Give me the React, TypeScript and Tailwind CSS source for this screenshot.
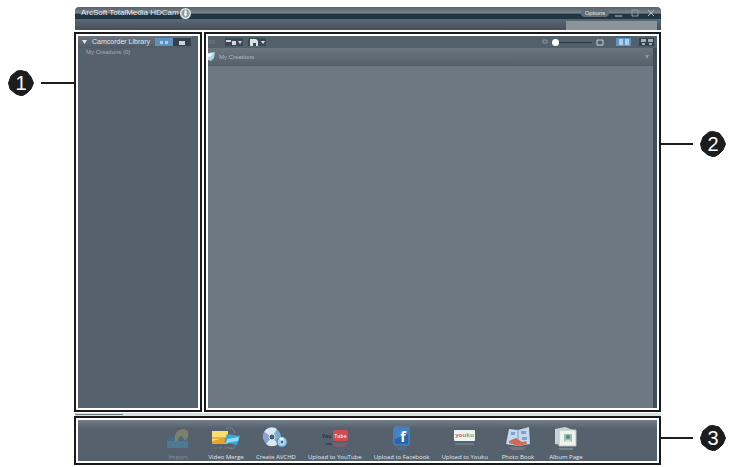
import type { ReactNode } from 'react';

function Badge({ n }: { n: string }) {
  return (
    <span className="relative flex size-[26px] shrink-0 items-center justify-center">
      <svg viewBox="0 0 26 26" className="absolute inset-0 size-full" aria-hidden="true">
        <path d="M9 1 L13 .5 L19 2 L23 7 L25.5 13 L23 19 L19 23 L14 26 L8 24 L2 19 L.5 13 L3 6Z" fill="#1d1d1d" stroke="#1d1d1d" strokeLinejoin="round" />
      </svg>
      <span className="relative text-[20px] leading-5 text-white">{n}</span>
    </span>
  );
}

function RightCallout({ n }: { n: string }) {
  return (
    <div className="flex items-center">
      <span className="h-[2px] w-8 bg-[#1d1d1d]" />
      <span className="ml-[7px]"><Badge n={n} /></span>
    </div>
  );
}

function Frame({ className, children }: { className: string; children: ReactNode }) {
  return (
    <div className={`flex border-2 border-[#1b191a] bg-white p-0.5 ${className}`}>
      <div className="flex min-w-0 flex-1 flex-col">{children}</div>
    </div>
  );
}

const importIcon = (
  <g opacity=".65">
    <path d="M3 11h7l2-2h12v12H3z" fill="#3d7193" />
    <path d="M3 14h21v7H3z" fill="#4a87a8" />
    <path d="M11 14c-1-7 2-12 9-12 4 1 5 4 4 8l-3 4-3-5-3 1-1 4z" fill="#96916c" />
  </g>
);

const mergeIcon = (
  <>
    <path d="M14 2q6-4 9 4M15 20q6 4 9-2" fill="none" stroke="#718497" />
    <path d="M0 4h16v13H0z" fill="#e5a72a" />
    <path d="M0 4h16v6L0 14z" fill="#ffdc6c" />
    <path d="M0 11h16" stroke="#c98b22" />
    <path d="M15 7l13 2-3 9-13-3z" fill="#38a5dc" />
    <path d="M15 12l12-2-1 4-12 2z" fill="#8bdcff" />
    <path d="M2 21h18" stroke="#8b795a" strokeDasharray="3 2" />
  </>
);

const discIcon = (
  <>
    <circle cx="10" cy="10" r="9" fill="#7eacd0" />
    <path d="M10 10L2 5A9 9 0 0 1 15 2zM10 10l6 7a9 9 0 0 1-12 0z" fill="#d3e9f7" />
    <path d="M10 10L1 12a9 9 0 0 1 1-7z" fill="#9b9bd7" />
    <circle cx="10" cy="10" r="3" fill="#486077" stroke="#dcefff" />
    <circle cx="20" cy="15" r="5" fill="#9bcce9" stroke="#5284ac" />
    <path d="M20 15l-3-4a5 5 0 0 1 5 0z" fill="#effaff" />
    <circle cx="20" cy="15" r="2" fill="#416480" stroke="#d8f0ff" />
  </>
);

const youtubeIcon = (
  <>
    <text x="1" y="11" fontSize="5" fontWeight="700" fill="#283039">You</text>
    <rect x="12" y="3" width="15" height="11" rx="2" fill="#cf4d51" />
    <text x="19.5" y="11" fontSize="5" fontWeight="700" textAnchor="middle" fill="#f8d7d5">Tube</text>
    <path d="M12 16h14l-2 4H13z" fill="#87646d" opacity=".6" />
    <path d="M4 16h7v2H5z" fill="#3e4853" />
  </>
);

const facebookIcon = (
  <>
    <rect x="6" y="0" width="15" height="18" rx="2" fill="#2465af" stroke="#5c91ca" />
    <path d="M7 1h13v6L7 12z" fill="#4384c8" />
    <text x="15" y="15" fontSize="14" fontWeight="700" textAnchor="middle" fill="#fff">f</text>
    <path d="M8 20h11l-3 3h-6z" fill="#566f99" opacity=".7" />
  </>
);

const youkuIcon = (
  <>
    <rect x="3" y="3" width="21" height="11" rx="1" fill="#edf3f1" />
    <text x="13.5" y="10" fontSize="6" fontWeight="700" textAnchor="middle" fill="#d3685d">yo<tspan fill="#58aaa0">uku</tspan></text>
    <path d="M4 16h19v2H4z" fill="#707b84" />
  </>
);

const photoIcon = (
  <>
    <path d="M5 2l9 1 11-3 1 17-12 2-12-2z" fill="#c3d9f0" />
    <path d="M14 3v14" stroke="#7b9bc3" />
    <path d="M7 5h4v3H7zm10-1h5v3h-5zm1 6h5v3h-5z" fill="#84a2c9" />
    <path d="M5 14l7-3 6 4 4-1 1 3-9 2-9-3z" fill="#d06a52" />
    <path d="M5 20h17l-3 3H8z" fill="#747481" />
  </>
);

const albumIcon = (
  <>
    <path d="M3 2l10-2 11 4-3 15-18-2z" fill="#c5d7d2" />
    <path d="M7 3h17v16H7z" fill="#eef3ee" stroke="#b5c4c5" />
    <path d="M12 7h8v8h-8z" fill="#a3bbb5" />
    <circle cx="16" cy="10" r="2" fill="#5d8381" />
    <path d="M12 15q4-5 8 0z" fill="#d6e3db" />
    <path d="M6 21h15v2H8z" fill="#76838a" />
  </>
);

const actions = [
  { label: 'Import', icon: importIcon, dim: true },
  { label: 'Video Merge', icon: mergeIcon },
  { label: 'Create AVCHD', icon: discIcon },
  { label: 'Upload to YouTube', icon: youtubeIcon },
  { label: 'Upload to Facebook', icon: facebookIcon },
  { label: 'Upload to Youku', icon: youkuIcon },
  { label: 'Photo Book', icon: photoIcon },
  { label: 'Album Page', icon: albumIcon },
];

function TitleBar() {
  return (
    <header className="ml-px text-[#e4e8ea]">
      <div className="flex h-3 items-center rounded-t-sm bg-linear-to-b from-[#5d6871] from-10% via-[#7b858e] via-50% to-[#223642] to-60% px-1.5">
        <h1 className="text-[8px] leading-3">ArcSoft TotalMedia HDCam</h1>
        <button aria-label="Downloads" className="ml-px flex size-[11px] items-center justify-center rounded-full bg-[#dfe4e6]">
          <svg width="11" height="11" aria-hidden="true"><circle cx="5.5" cy="5.5" r="4" fill="#98a3aa" /><path d="M4 2h3v4h1L5.5 9 3 6h1z" fill="#f4f6f7" stroke="#6b777f" strokeWidth=".5" /></svg>
        </button>
        <button className="ml-auto h-2 w-7 rounded-sm bg-[#5f6d77] text-[6px] leading-2">Options</button>
        <div className="ml-1.5 flex gap-2">
          <button aria-label="Minimize"><svg width="8" height="8" aria-hidden="true"><path d="M0 7h7" stroke="#b9c3c9" /></svg></button>
          <button aria-label="Maximize"><svg width="8" height="8" aria-hidden="true"><path d="M1 1h6v6H1z" fill="none" stroke="#93a0a8" /></svg></button>
          <button aria-label="Close"><svg width="8" height="8" aria-hidden="true"><path d="M1 1l6 6M7 1L1 7" stroke="#b5c0c6" /></svg></button>
        </div>
      </div>
      <div className="flex h-[11px] justify-end bg-linear-to-b from-[#5a6875] to-[#46505c] pr-1">
        <input aria-label="Search" className="mt-0.5 h-[9px] w-[91px] bg-[#8b949b] px-1 text-[6px]" />
      </div>
    </header>
  );
}

function Library() {
  return (
    <div className="flex-1 bg-[#56616e]">
      <div className="mr-1.5 flex h-3 items-center bg-linear-to-b from-[#6a737b] to-[#505b67] pl-1">
        <svg width="5" height="4" aria-hidden="true"><path d="M0 0h5L2.5 4z" fill="#e0e5e8" /></svg>
        <h2 className="ml-[5px] w-[63px] text-[7px] leading-3 text-[#dfe4e7]">Camcorder Library</h2>
        <button aria-label="Folder view" className="flex h-2 w-[18px] items-center justify-center bg-[#5e91bd]"><svg width="8" height="5" aria-hidden="true"><path d="M0 1h3v3H0zm5 0h3v3H5z" fill="#a9cbe3" /></svg></button>
        <button aria-label="Calendar view" className="flex h-2 w-[18px] items-center justify-center bg-[#34414c]"><svg width="8" height="5" aria-hidden="true"><path d="M1 1h6v4H1z" fill="#cbd3d7" /></svg></button>
      </div>
      <p className="ml-2 text-[6px] leading-2 text-[#a4adb6]">My Creations (0)</p>
    </div>
  );
}

function Browser() {
  return (
    <>
      <div className="flex h-3 shrink-0 items-center bg-[#52606c] pr-[3px]">
        <svg width="8" height="6" aria-hidden="true"><path d="M1 2h6M1 4h6" stroke="#6d7a85" /></svg>
        <button aria-label="Sort" className="ml-[9px] flex h-2 w-[18px] items-center justify-center bg-[#3c4852]"><svg width="16" height="7" aria-hidden="true"><path d="M0 1h5v2H0zM6 2h4v4H6zM12 2h4l-2 3z" fill="#ced7dc" /></svg></button>
        <button aria-label="Save options" className="ml-[5px] flex h-2 w-[18px] items-center justify-center bg-[#3c4852]"><svg width="16" height="8" aria-hidden="true"><path d="M1 1h6l2 2v5H7V5H4v3H1zM12 3h4l-2 3z" fill="#d9e1e5" /></svg></button>
        <svg className="ml-auto" width="6" height="6" aria-hidden="true"><path d="M1 1h4v3H1z" fill="none" stroke="#8a969f" /></svg>
        <input aria-label="Thumbnail size" type="range" min="0" max="100" defaultValue="0" className="ml-1 h-[7px] w-10 appearance-none bg-linear-to-b from-transparent from-40% via-[#273743] via-50% to-transparent to-65% [&::-webkit-slider-thumb]:size-[7px] [&::-webkit-slider-thumb]:appearance-none [&::-webkit-slider-thumb]:rounded-full [&::-webkit-slider-thumb]:bg-white" />
        <svg className="ml-1" width="8" height="7" aria-hidden="true"><path d="M1 1h6v5H1z" fill="none" stroke="#c5ced4" /></svg>
        <button aria-label="Grid view" className="ml-3 flex h-2 w-[15px] items-center justify-center bg-[#6094c2]"><svg width="10" height="6" aria-hidden="true"><path d="M0 0h4v6H0zm6 0h4v6H6z" fill="#a8d0ec" /></svg></button>
        <button aria-label="Filmstrip view" className="ml-2 flex h-2 w-[15px] items-center justify-center bg-[#35424d]"><svg width="12" height="6" aria-hidden="true"><path d="M0 0h5v3H0zM7 0h5v3H7zM1 4h3v2H1zM8 4h3v2H8z" fill="#a3afb7" /></svg></button>
      </div>
      <div className="flex flex-1 bg-[#40515f]">
        <div className="flex flex-1 flex-col">
          <div className="flex h-[18px] items-center border-b border-[#515e68] bg-linear-to-b from-[#6a757e] to-[#56616c] pr-1">
            <svg width="8" height="10" aria-hidden="true"><path d="M0 1l7-1-1 6-3 3-3-1z" fill="#add4e7" /><path d="M0 2l5-1-2 3-3 1z" fill="#f1fbff" /></svg>
            <h2 className="ml-[3px] text-[6px] leading-3 text-[#b3bdc4]">My Creations</h2>
            <button aria-label="Collapse" className="ml-auto"><svg width="4" height="4" aria-hidden="true"><path d="M0 0h4L2 4z" fill="#8c99a3" /></svg></button>
          </div>
          <div className="flex-1 bg-[#6d7882]" />
        </div>
        <div className="w-1 bg-[#3d4e5c]" />
      </div>
    </>
  );
}

export default function App() {
  return (
    <main className="flex min-h-screen bg-white pb-0.5 pt-[7px] font-['Liberation_Sans',sans-serif]">
      <aside className="flex w-[74px] shrink-0 items-start pl-2 pt-[63px]">
        <div className="flex w-full items-center">
          <Badge n="1" />
          <span className="ml-[7px] h-[2px] flex-1 bg-[#1d1d1d]" />
        </div>
      </aside>
      <section className="flex min-w-0 flex-1 flex-col">
        <TitleBar />
        <div className="mt-0.5 flex flex-1 gap-0.5">
          <Frame className="w-32"><Library /></Frame>
          <Frame className="flex-1"><Browser /></Frame>
        </div>
        <div className="ml-px mt-px flex h-[3px] bg-[#d9dfde]"><span className="mt-px h-px w-12 bg-[#6d7a79]" /></div>
        <Frame className="h-[49px]">
          <nav aria-label="Create and share" className="flex flex-1 items-end gap-3 bg-linear-to-b from-[#738087] to-[#56616e] to-20% pl-[82px] font-['Open_Sans',sans-serif]">
            {actions.map(({ label, icon, dim }) => (
              <button key={label} className="flex min-w-9 flex-col items-center gap-0.5 whitespace-nowrap">
                <svg viewBox="0 0 28 24" width="28" height="24" className="overflow-visible" aria-hidden="true">{icon}</svg>
                <span className={`text-[6px] leading-2 ${dim ? 'text-[#87919b]' : 'text-[#e2e7eb]'}`}>{label}</span>
              </button>
            ))}
          </nav>
        </Frame>
      </section>
      <aside className="flex w-[73px] shrink-0 flex-col justify-between pb-[14px] pt-[124px]">
        <RightCallout n="2" />
        <RightCallout n="3" />
      </aside>
    </main>
  );
}
